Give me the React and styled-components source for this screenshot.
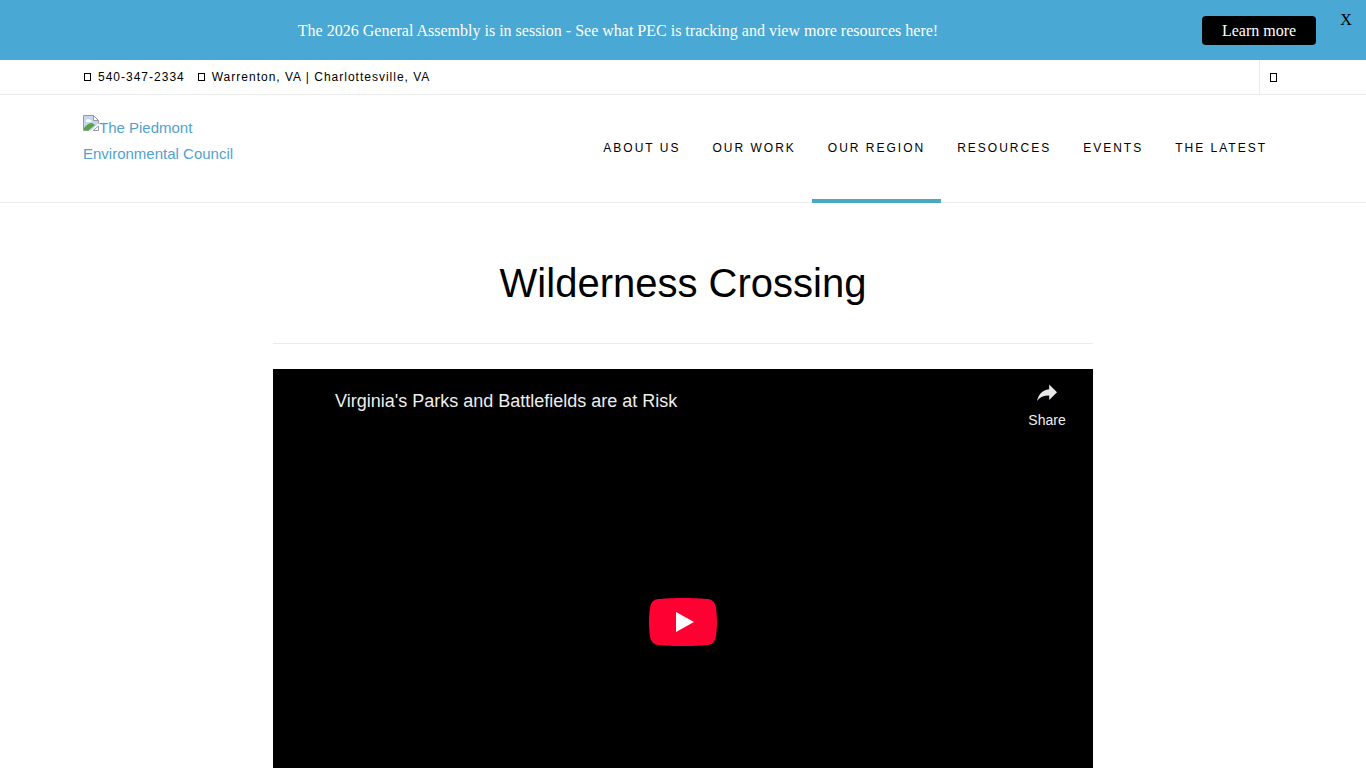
import React from 'react'
import styled, { createGlobalStyle } from 'styled-components'

const menus = ['About Us', 'Our Work', 'Our Region', 'Resources', 'Events', 'The Latest']

const GlyphBox = ({ height = 8 }) => (
    <svg width="8" height={height} aria-hidden="true">
        <rect x="1.5" y="0.5" width="6" height={height - 1} fill="none" stroke="currentColor" />
    </svg>
)

const MissingPicture = () => (
    <svg width="16" height="16" viewBox="0 0 16 16" aria-hidden="true">
        <path d="M.5.5h10l5 5v3L8 15.500H.5z" fill="#c6d5f2" />
        <path d="M1 15v-2c2-3 5-5 8-5l3 2-6 5z" fill="#56a445" />
        <path d="M3 6c0-2 3-3 4-1 2 0 2 2 1 2H3z" fill="#fff" />
        <path d="M10.500.5v5h5z" fill="#fff" />
        <path d="M6 15.500H.5V.5h10l5 5v3M10.500.5v5h5M10 15.500h5.500V11z" fill="none" stroke="#9a9a9a" />
    </svg>
)

const App = () => {
    return (
        <>
            <GlobalStyle />
            <StBanner>
                <StBannerText>
                    The 2026 General Assembly is in session - See what PEC is tracking and view more resources here!
                </StBannerText>
                <StLearnMore type="button">Learn more</StLearnMore>
                <StClose type="button" aria-label="Close">X</StClose>
            </StBanner>
            <StTopBar>
                <StTopInner>
                    <StContact>
                        <StContactItem><GlyphBox />540-347-2334</StContactItem>
                        <StContactItem><GlyphBox />Warrenton, VA | Charlottesville, VA</StContactItem>
                    </StContact>
                    <StSearch type="button" aria-label="Search"><GlyphBox height={9} /></StSearch>
                </StTopInner>
            </StTopBar>
            <StHeader>
                <StHeaderInner>
                    <StLogo href="#"><MissingPicture />The Piedmont Environmental Council</StLogo>
                    <StNav>
                        {menus.map((menu) => (
                            <StNavLink key={menu} href="#" $active={menu === 'Our Region'}>{menu}</StNavLink>
                        ))}
                    </StNav>
                </StHeaderInner>
            </StHeader>
            <StMain>
                <StTitle>Wilderness Crossing</StTitle>
                <StVideo>
                    <StVideoTop>
                        <StVideoTitle href="#">Virginia's Parks and Battlefields are at Risk</StVideoTitle>
                        <StShare type="button">
                            <svg width="36" height="36" viewBox="0 0 36 36" aria-hidden="true">
                                <path d="m20.200 14.190V9.500L28 17.300l-7.800 7.800v-4.560c-5.620 0-9.600 1.760-12.200 5.500 1.050-5.200 4.250-10.800 12.200-11.850z" fill="#e8e8e8" />
                            </svg>
                            Share
                        </StShare>
                    </StVideoTop>
                    <StPlay type="button" aria-label="Play">
                        <svg width="68" height="48" viewBox="0 0 68 48" aria-hidden="true">
                            <path d="M66.520 7.740c-.78-2.930-2.490-5.410-5.420-6.190C55.790.13 34 0 34 0S12.210.13 6.900 1.550C3.970 2.330 2.270 4.810 1.480 7.740.06 13.050 0 24 0 24s.06 10.950 1.480 16.260c.78 2.930 2.490 5.410 5.420 6.190C12.210 47.870 34 48 34 48s21.790-.13 27.100-1.550c2.930-.78 4.640-3.260 5.420-6.190C67.940 34.950 68 24 68 24s-.06-10.950-1.480-16.260z" fill="#f03" />
                            <path d="M45 24 27 14v20" fill="#fff" />
                        </svg>
                    </StPlay>
                </StVideo>
            </StMain>
        </>
    )
}

export default App

const GlobalStyle = createGlobalStyle`
    * {
        box-sizing: border-box;
    }
    html {
        scrollbar-width: none;
    }
    body {
        margin: 0;
        background-color: #fff;
        color: #000;
        font-family: "Liberation Sans", Arial, sans-serif;
    }
    a {
        text-decoration: none;
    }
`
const StButton = styled.button`
    padding: 0;
    border: none;
    background: none;
    color: inherit;
    font-family: inherit;
    cursor: pointer;
`
const StBanner = styled.div`
    display: flex;
    align-items: center;
    height: 60px;
    padding-left: 34px;
    background-color: #49a8d4;
    color: #fff;
    font-family: "Liberation Serif", "Times New Roman", serif;
    font-size: 16px;
`
const StBannerText = styled.p`
    flex: 1;
    margin: 0;
    padding-top: 2px;
    text-align: center;
`
const StLearnMore = styled(StButton)`
    width: 114px;
    height: 29px;
    padding-top: 2px;
    border-radius: 4px;
    background-color: #000;
    font-size: 16px;
`
const StClose = styled(StButton)`
    align-self: flex-start;
    width: 50px;
    height: 40px;
    padding-left: 10px;
    color: #000;
    font-size: 16px;
`
const StTopBar = styled.div`
    border-bottom: 1px solid #ebebeb;
`
const StTopInner = styled.div`
    display: flex;
    justify-content: space-between;
    max-width: 1200px;
    margin: 0 auto;
`
const StContact = styled.div`
    display: flex;
    align-items: center;
    gap: 12px;
    height: 34px;
    font-size: 12px;
    letter-spacing: 1px;
`
const StContactItem = styled.span`
    display: flex;
    align-items: center;
    gap: 7px;
`
const StSearch = styled(StButton)`
    display: flex;
    align-items: center;
    width: 24px;
    padding-left: 9px;
    border-left: 1px solid #ebebeb;
`
const StHeader = styled.header`
    border-bottom: 1px solid #ebebeb;
`
const StHeaderInner = styled.div`
    display: flex;
    justify-content: space-between;
    max-width: 1200px;
    height: 107px;
    margin: 0 auto;
`
const StLogo = styled.a`
    width: 160px;
    padding-top: 20px;
    color: #4fa3cf;
    font-size: 15px;
    line-height: 26px;

    svg {
        vertical-align: top;
    }
`
const StNav = styled.nav`
    display: flex;
    height: 108px;
`
const StNavLink = styled.a`
    display: flex;
    align-items: center;
    padding: 2px 16px 0;
    border-bottom: 4px solid ${({ $active }) => ($active ? '#49a8c4' : 'transparent')};
    color: #000;
    font-size: 12px;
    letter-spacing: 2px;
    text-transform: uppercase;
    white-space: nowrap;
`
const StMain = styled.main`
    max-width: 820px;
    margin: 0 auto;
`
const StTitle = styled.h1`
    margin: 0 0 25px;
    padding: 56px 0 36px;
    border-bottom: 1px solid #ebebeb;
    font-size: 40px;
    font-weight: 400;
    line-height: 48px;
    text-align: center;
`
const StVideo = styled.section`
    display: grid;
    grid-template-rows: 1fr auto 1fr;
    justify-items: center;
    height: 506px;
    background-color: #000;
    color: #eee;
`
const StVideoTop = styled.div`
    display: flex;
    justify-content: space-between;
    align-items: flex-start;
    width: 100%;
    padding: 6px 22px 0 62px;
`
const StVideoTitle = styled.a`
    padding-top: 14px;
    color: #eee;
    font-size: 18px;
    line-height: 24px;
`
const StShare = styled(StButton)`
    display: flex;
    flex-direction: column;
    align-items: center;
    width: 48px;
    font-size: 14px;
    line-height: 18px;
`
const StPlay = styled(StButton)`
    display: flex;
`
